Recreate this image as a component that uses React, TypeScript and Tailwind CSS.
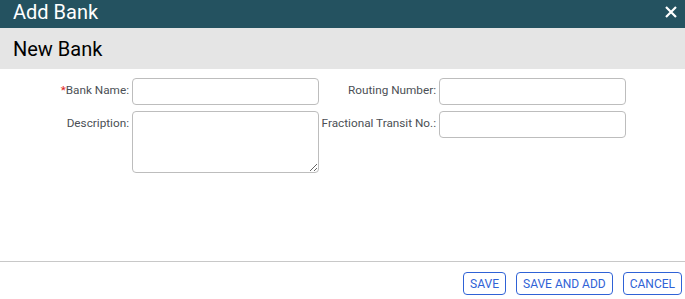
import React from "react";

export default function App() {
  const font = { fontFamily: "Roboto, 'Liberation Sans', sans-serif" };
  return (
    <div className="w-[685px] h-[299px] bg-white flex flex-col overflow-hidden" style={font}>
      <div className="h-[28px] bg-[#245260] flex items-center justify-between pl-[13px] pr-[8px] shrink-0">
        <span className="text-white text-[20px] leading-[28px] -mt-[4px]">Add Bank</span>
        <svg width="12" height="12" viewBox="0 0 12 12" className="-mt-[4px]">
          <path d="M1 1L11 11M11 1L1 11" stroke="white" strokeWidth="2.2" />
        </svg>
      </div>
      <div className="h-[41px] bg-[#e5e5e5] flex items-center pl-[13px] shrink-0">
        <span className="text-black text-[20px] leading-[28px]">New Bank</span>
      </div>
      <div className="flex-1 pt-[9px]">
        <div className="flex flex-col gap-[6px]">
          <div className="flex items-start">
            <label className="w-[129px] h-[25px] flex items-center justify-end text-[11.75px] text-[#4b4f55] mr-[3px]">
              <span className="text-[#e02020]">*</span>Bank Name:
            </label>
            <input className="w-[187px] h-[27px] border border-[#bdbdbd] rounded-[4px] outline-none" />
            <label className="w-[117px] h-[25px] flex items-center justify-end text-[11.75px] text-[#4b4f55] mr-[3px]">
              Routing Number:
            </label>
            <input className="w-[187px] h-[27px] border border-[#bdbdbd] rounded-[4px] outline-none" />
          </div>
          <div className="flex items-start">
            <label className="w-[129px] h-[25px] flex items-center justify-end text-[11.75px] text-[#4b4f55] mr-[3px]">
              Description:
            </label>
            <textarea className="w-[187px] h-[62px] border border-[#bdbdbd] rounded-[4px] outline-none resize" />
            <label className="w-[117px] h-[25px] flex items-center justify-end text-[11.75px] text-[#4b4f55] mr-[3px]">
              Fractional Transit No.:
            </label>
            <input className="w-[187px] h-[27px] border border-[#bdbdbd] rounded-[4px] outline-none" />
          </div>
        </div>
      </div>
      <div className="h-[38px] border-t border-[#c8c8c8] flex items-start justify-end pt-[10px] pr-[3px] gap-[10px] shrink-0">
        <button className="h-[23px] px-[6px] border border-[#2f62d6] rounded-[4px] text-[12px] text-[#2f62d6] leading-none">SAVE</button>
        <button className="h-[23px] px-[6px] border border-[#2f62d6] rounded-[4px] text-[12px] text-[#2f62d6] leading-none">SAVE AND ADD</button>
        <button className="h-[23px] px-[6px] border border-[#2f62d6] rounded-[4px] text-[12px] text-[#2f62d6] leading-none">CANCEL</button>
      </div>
    </div>
  );
}
